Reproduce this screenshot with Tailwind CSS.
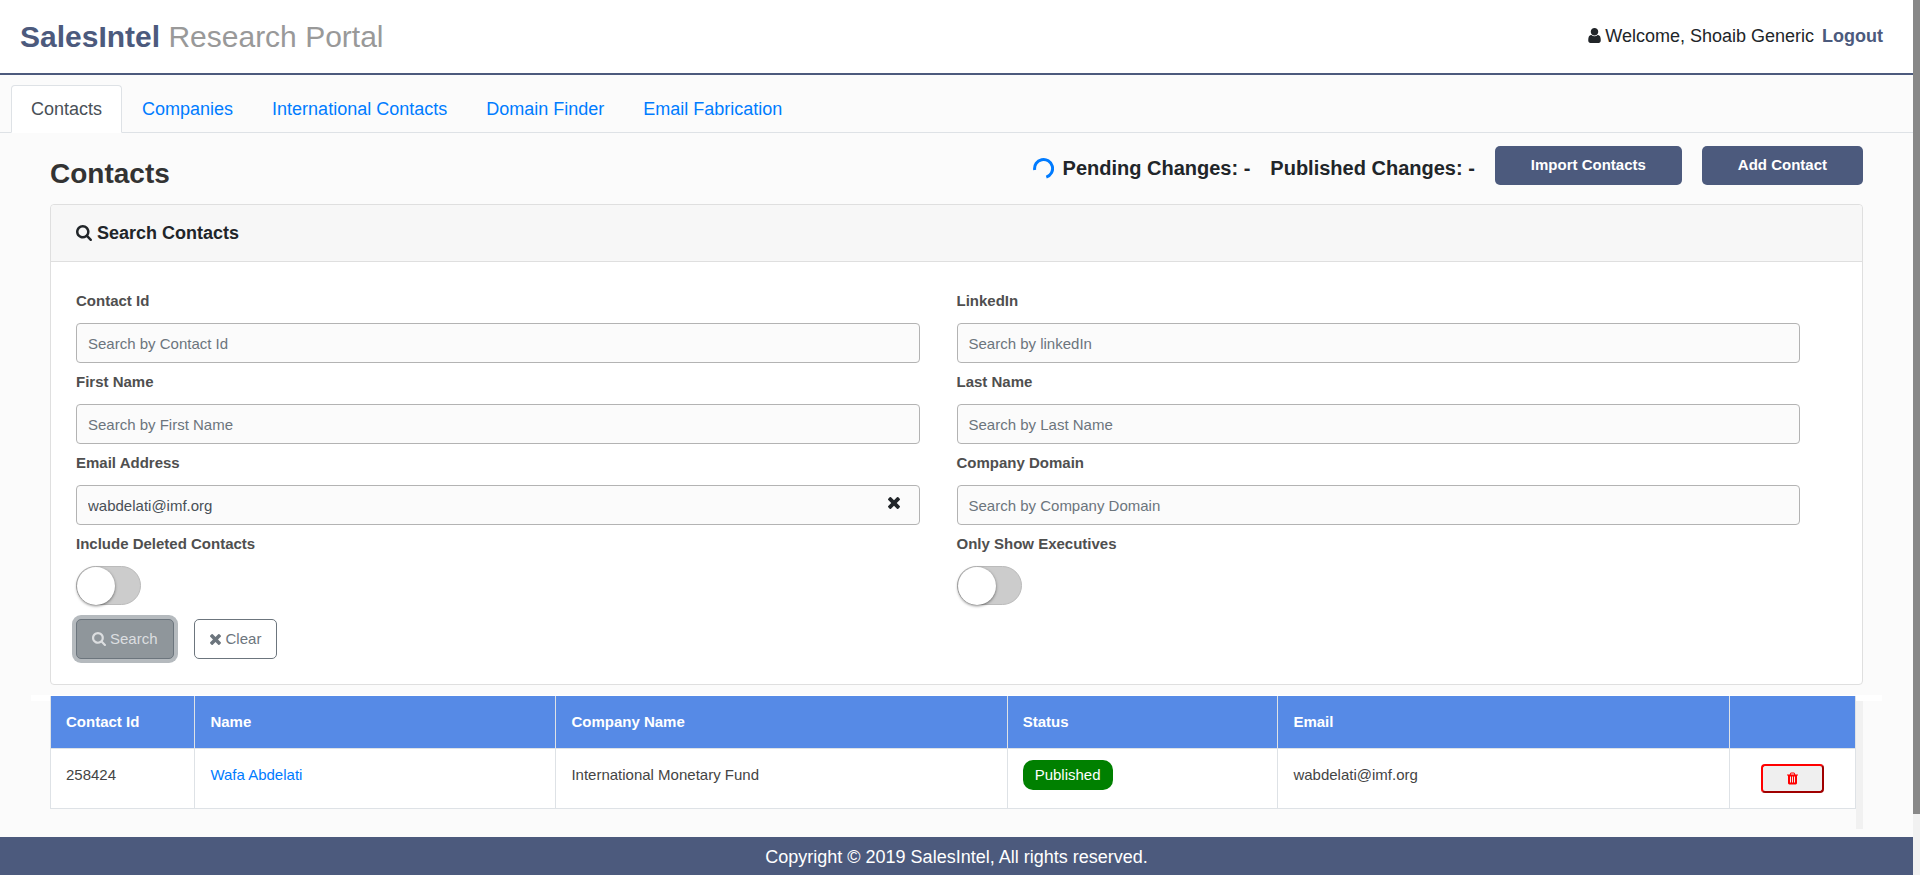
<!DOCTYPE html>
<html lang="en">
<head>
<meta charset="utf-8">
<meta name="viewport" content="width=device-width, initial-scale=1">
<title>SalesIntel Research Portal</title>
<script src="https://cdn.jsdelivr.net/npm/@tailwindcss/browser@4"></script>
</head>
<body class="flex min-h-screen bg-[#fbfbfb] font-['Liberation_Sans',Arial,sans-serif] text-[15px] text-[#212529]">
<svg class="hidden" aria-hidden="true">
  <symbol id="search" viewBox="64 128 1664 1664"><path d="M1216 832q0-185-131.5-316.5t-316.5-131.5-316.5 131.5-131.5 316.5 131.5 316.5 316.5 131.5 316.5-131.5 131.5-316.5zm512 832q0 52-38 90t-90 38q-54 0-90-38l-343-342q-179 124-399 124-143 0-273.5-55.5t-225-150-150-225-55.5-273.5 55.5-273.5 150-225 225-150 273.5-55.5 273.5 55.5 225 150 150 225 55.5 273.5q0 220-124 399l343 343q37 37 37 90z"/></symbol>
  <symbol id="user" viewBox="256 128 1280 1536"><path d="M1536 1399q0 109-62.5 187t-150.5 78h-854q-88 0-150.5-78t-62.5-187q0-85 8.5-160.5t31.5-152 58.5-131 94-89 134.5-34.5q131 128 313 128t313-128q76 0 134.5 34.5t94 89 58.5 131 31.5 152 8.5 160.5zm-256-887q0 159-112.5 271.5t-271.5 112.5-271.5-112.5-112.5-271.5 112.5-271.5 271.5-112.5 271.5 112.5 112.5 271.5z"/></symbol>
  <symbol id="times" viewBox="302 366 1188 1188"><path d="M1490 1322q0 40-28 68l-136 136q-28 28-68 28t-68-28l-294-294-294 294q-28 28-68 28t-68-28l-136-136q-28-28-28-68t28-68l294-294-294-294q-28-28-28-68t28-68l136-136q28-28 68-28t68 28l294 294 294-294q28-28 68-28t68 28l136 136q28 28 28 68t-28 68l-294 294 294 294q28 28 28 68z"/></symbol>
  <symbol id="trash" viewBox="192 128 1408 1536"><path d="M704 1376v-704q0-14-9-23t-23-9h-64q-14 0-23 9t-9 23v704q0 14 9 23t23 9h64q14 0 23-9t9-23zm256 0v-704q0-14-9-23t-23-9h-64q-14 0-23 9t-9 23v704q0 14 9 23t23 9h64q14 0 23-9t9-23zm256 0v-704q0-14-9-23t-23-9h-64q-14 0-23 9t-9 23v704q0 14 9 23t23 9h64q14 0 23-9t9-23zm-544-992h448l-48-117q-7-9-17-11h-317q-10 2-17 11zm928 32v64q0 14-9 23t-23 9h-96v948q0 83-47 143.5t-113 60.5h-832q-66 0-113-58.5t-47-141.5v-952h-96q-14 0-23-9t-9-23v-64q0-14 9-23t23-9h309l70-167q15-37 54-63t79-26h320q40 0 79 26t54 63l70 167h309q14 0 23 9t9 23z"/></symbol>
</svg>

<div class="flex min-w-0 flex-1 flex-col">
  <header class="flex items-center justify-between border-b-2 border-[#4c5a7d] bg-white pt-[14px] pr-[30px] pb-[14px] pl-5">
    <h1 class="text-[30px] leading-[45px] text-[#999]"><span class="font-bold text-[#4c5a7d]">SalesIntel</span> Research Portal</h1>
    <div class="flex items-center pb-[2px] text-lg">
      <svg class="mr-1 h-[15px] w-[13px] fill-current" aria-hidden="true"><use href="#user"/></svg>
      <span>Welcome, Shoaib Generic</span>
      <a href="#" class="ml-2 font-bold text-[#4c5a7d]">Logout</a>
    </div>
  </header>

  <nav class="flex gap-px border-b border-[#dee2e6] pt-[10px] pl-[11px] text-lg text-[#007bff]">
    <a href="#" class="-mb-px rounded-t border border-[#dee2e6] border-b-white bg-white px-[19px] py-[9px] text-[#495057]" aria-current="page">Contacts</a>
    <a href="#" class="-mb-px px-[19px] py-[10px]">Companies</a>
    <a href="#" class="-mb-px px-[19px] py-[10px]">International Contacts</a>
    <a href="#" class="-mb-px px-[19px] py-[10px]">Domain Finder</a>
    <a href="#" class="-mb-px px-[19px] py-[10px]">Email Fabrication</a>
  </nav>

  <main class="flex-1 px-[50px] pt-[13px] pb-2">
    <div class="flex items-start pb-[2px]">
      <h2 class="flex-1 text-[28px] leading-[56px] font-bold text-[#333]">Contacts</h2>
      <div class="flex items-center gap-5 text-xl leading-[44px] font-bold">
        <span class="flex items-center gap-[9px]">
          <svg class="size-[21px] fill-none stroke-[#007bff] stroke-3" viewBox="0 0 21 21" aria-hidden="true"><path d="M1.7 12A9 9 0 1 1 13.3 19.1"/></svg>
          Pending Changes: -
        </span>
        <span>Published Changes: -</span>
      </div>
      <button type="button" class="ml-5 h-[39px] rounded-[5px] bg-[#4c5a7d] px-9 font-bold text-white">Import Contacts</button>
      <button type="button" class="ml-5 h-[39px] rounded-[5px] bg-[#4c5a7d] px-9 font-bold text-white">Add Contact</button>
    </div>

    <section class="rounded border border-[#dfdfdf] bg-white">
      <h3 class="flex items-center gap-[5px] rounded-t border-b border-[#dfdfdf] bg-[#f7f7f7] px-[25px] text-lg leading-[56px] font-bold">
        <svg class="size-4 fill-current" aria-hidden="true"><use href="#search"/></svg>
        Search Contacts
      </h3>
      <form class="px-[25px] pt-[29px] pb-[25px]">
        <div class="grid grid-cols-2 gap-y-[9px] leading-5 text-[#495057]">
          <div class="flex flex-col gap-3 pr-[37px]">
            <label for="cid" class="font-bold text-[#4f4f4f]">Contact Id</label>
            <input id="cid" type="text" placeholder="Search by Contact Id" class="h-10 rounded border border-[#b3b3b3] bg-[#fbfbfb] px-[11px] placeholder:text-[#6c757d]">
          </div>
          <div class="flex flex-col gap-3 pr-[37px]">
            <label for="lin" class="font-bold text-[#4f4f4f]">LinkedIn</label>
            <input id="lin" type="text" placeholder="Search by linkedIn" class="h-10 rounded border border-[#b3b3b3] bg-[#fbfbfb] px-[11px] placeholder:text-[#6c757d]">
          </div>
          <div class="flex flex-col gap-3 pr-[37px]">
            <label for="first" class="font-bold text-[#4f4f4f]">First Name</label>
            <input id="first" type="text" placeholder="Search by First Name" class="h-10 rounded border border-[#b3b3b3] bg-[#fbfbfb] px-[11px] placeholder:text-[#6c757d]">
          </div>
          <div class="flex flex-col gap-3 pr-[37px]">
            <label for="last" class="font-bold text-[#4f4f4f]">Last Name</label>
            <input id="last" type="text" placeholder="Search by Last Name" class="h-10 rounded border border-[#b3b3b3] bg-[#fbfbfb] px-[11px] placeholder:text-[#6c757d]">
          </div>
          <div class="flex flex-col gap-3 pr-[37px]">
            <label for="email" class="font-bold text-[#4f4f4f]">Email Address</label>
            <div class="relative">
              <input id="email" type="text" value="wabdelati@imf.org" class="h-10 w-full rounded border border-[#b3b3b3] bg-[#fbfbfb] pr-11 pl-[11px]">
              <button type="button" aria-label="Clear email" class="absolute top-3 right-5 flex text-[#212529]"><svg class="size-3 fill-current" aria-hidden="true"><use href="#times"/></svg></button>
            </div>
          </div>
          <div class="flex flex-col gap-3 pr-[37px]">
            <label for="domain" class="font-bold text-[#4f4f4f]">Company Domain</label>
            <input id="domain" type="text" placeholder="Search by Company Domain" class="h-10 rounded border border-[#b3b3b3] bg-[#fbfbfb] px-[11px] placeholder:text-[#6c757d]">
          </div>
          <div class="flex flex-col items-start gap-3 pr-[37px]">
            <label for="deleted" class="font-bold text-[#4f4f4f]">Include Deleted Contacts</label>
            <input id="deleted" type="checkbox" class="flex h-[39px] w-[65px] appearance-none items-center rounded-full border border-[#bbb] bg-[#ccc] before:block before:size-[38px] before:rounded-full before:bg-white before:shadow-[0_1px_3px_rgba(0,0,0,0.5)] before:content-['']">
          </div>
          <div class="flex flex-col items-start gap-3 pr-[37px]">
            <label for="exec" class="font-bold text-[#4f4f4f]">Only Show Executives</label>
            <input id="exec" type="checkbox" class="flex h-[39px] w-[65px] appearance-none items-center rounded-full border border-[#bbb] bg-[#ccc] before:block before:size-[38px] before:rounded-full before:bg-white before:shadow-[0_1px_3px_rgba(0,0,0,0.5)] before:content-['']">
          </div>
        </div>
        <div class="mt-[14px] flex gap-5">
          <button type="button" class="flex h-10 items-center gap-1 rounded-[5px] border border-[#6c757d] bg-[#8f969b] px-[15px] text-[#dcdee0] ring-4 ring-[#b5babe]">
            <svg class="size-[14px] fill-current" aria-hidden="true"><use href="#search"/></svg>Search
          </button>
          <button type="button" class="flex h-10 items-center gap-[5px] rounded-[5px] border border-[#6c757d] bg-white px-[15px] text-[#6c757d]">
            <svg class="size-[11px] fill-current" aria-hidden="true"><use href="#times"/></svg>Clear
          </button>
        </div>
      </form>
    </section>

    <!-- Results -->
    <div class="-mx-[19px] mt-[10px] h-[6px] bg-white"></div>
    <div class="relative -mt-[5px] flex">
      <div class="min-w-0 flex-1 pb-5">
        <table class="w-full table-fixed border-collapse text-left leading-5 text-[#444]">
          <colgroup><col class="w-[8%]"><col class="w-[20%]"><col class="w-[25%]"><col class="w-[15%]"><col class="w-[25%]"><col class="w-[7%]"></colgroup>
          <thead>
            <tr class="h-[52px] bg-[#568ae6] font-bold text-white">
              <th class="border-x border-b border-[#dee2e6] px-[15px]">Contact Id</th>
              <th class="border-x border-b border-[#dee2e6] px-[15px]">Name</th>
              <th class="border-x border-b border-[#dee2e6] px-[15px]">Company Name</th>
              <th class="border-x border-b border-[#dee2e6] px-[15px]">Status</th>
              <th class="border-x border-b border-[#dee2e6] px-[15px]">Email</th>
              <th class="border-x border-b border-[#dee2e6] px-[15px]" aria-label="Actions"></th>
            </tr>
          </thead>
          <tbody>
            <tr class="h-[60px] bg-white align-top">
              <td class="border border-[#dee2e6] px-[15px] pt-4">258424</td>
              <td class="border border-[#dee2e6] px-[15px] pt-4"><a href="#" class="text-[#007bff]">Wafa Abdelati</a></td>
              <td class="border border-[#dee2e6] px-[15px] pt-4">International Monetary Fund</td>
              <td class="border border-[#dee2e6] px-[15px] pt-[11px]"><span class="inline-block rounded-[10px] bg-[green] px-3 py-[5px] text-white">Published</span></td>
              <td class="border border-[#dee2e6] px-[15px] pt-4">wabdelati@imf.org</td>
              <td class="border border-[#dee2e6] pt-[15px]">
                <button type="button" aria-label="Delete contact" class="mx-auto flex h-[29px] w-[63px] items-center justify-center rounded border-2 border-[red] border-r-[#a00000] border-b-[#a00000] bg-[#efefef] text-[red]"><svg class="h-[13px] w-[11px] fill-current" aria-hidden="true"><use href="#trash"/></svg></button>
              </td>
            </tr>
          </tbody>
        </table>
      </div>
      <div class="mt-[5px] w-[7px] bg-[#f1f1f1]"></div>
    </div>
  </main>

  <footer class="bg-[#4c5a7d] pt-[7px] pb-[5px] text-center text-lg leading-[27px] text-white">Copyright © 2019 SalesIntel, All rights reserved.</footer>
</div>

<!-- Page scroll track -->
<div class="w-[7px] bg-[#f1f1f1]"><div class="h-[93%] bg-[#888]"></div></div>
</body>
</html>
